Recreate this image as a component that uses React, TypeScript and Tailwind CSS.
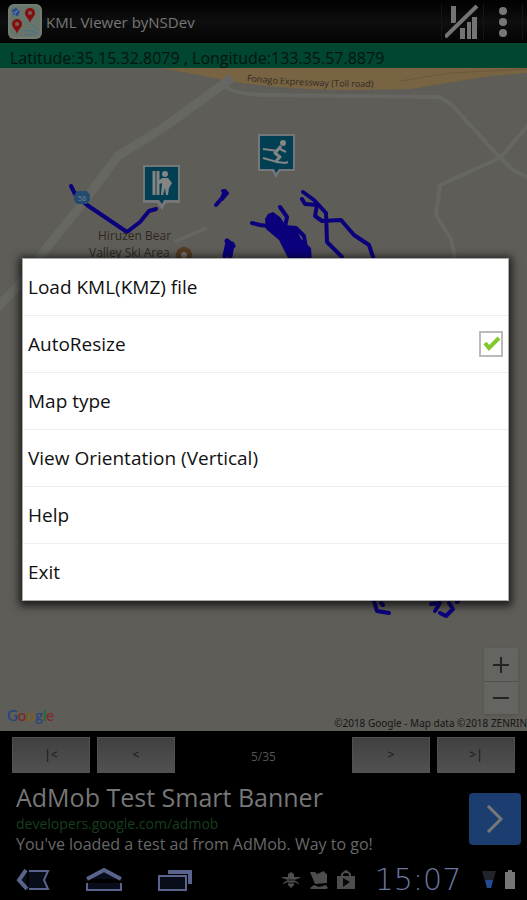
import React, { useState } from 'react';

const menuItems = [
  'Load KML(KMZ) file',
  'AutoResize',
  'Map type',
  'View Orientation (Vertical)',
  'Help',
  'Exit',
];

const Header: React.FC = () => (
  <header className="flex h-[43px] items-center bg-gradient-to-b from-[#020202] via-[#0f0f0f] to-[#040404] pr-1 pl-2">
    <AppIcon />
    <h1 className="ml-1 flex-1 text-[15px] leading-6 text-[#777777]">KML Viewer byNSDev</h1>
    <button aria-label="Signal" className="flex h-9 w-[42px] items-center justify-center border-l border-[#151515]">
      <svg width="36" height="36" viewBox="0 0 36 36" fill="#747474">
        <rect x="6" y="2" width="5" height="17" />
        <rect x="15" y="24" width="5" height="11" />
        <rect x="22" y="18" width="4" height="17" />
        <rect x="27" y="13" width="5" height="22" />
        <path d="M1 33L31 3" stroke="#090909" strokeWidth="7" />
        <path d="M0 33L32 2" stroke="#747474" strokeWidth="4" />
      </svg>
    </button>
    <button aria-label="More options" className="flex h-9 w-10 items-center justify-center border-x border-[#151515]">
      <svg width="12" height="32" viewBox="0 0 12 32" fill="#777">
        <circle cx="6" cy="5" r="4" />
        <circle cx="6" cy="16" r="4" />
        <circle cx="6" cy="27" r="4" />
      </svg>
    </button>
  </header>
);

const AppIcon: React.FC = () => (
  <svg width="34" height="35" viewBox="0 0 34 35">
    <rect width="34" height="35" rx="6" fill="#747c72" />
    <rect x="2" y="2" width="30" height="31" rx="5" fill="#68756a" />
    <path d="M4 6l4-2 4 3-2 5-5-1z" fill="#24488b" />
    <path d="M5 9l6-3M6 12l3-5" stroke="#6680a0" />
    <path d="M22 20l4 2 3 4M14 27l6-1 10 3M17 31l10-1" stroke="#49718a" fill="none" />
    <path d="M22 19c-1-5-5-6-5-10a5 5 0 0 1 10 0c0 4-4 5-5 10z" fill="#850d0d" />
    <circle cx="22" cy="9" r="2" fill="#74605c" />
    <path d="M9 30c-1-5-5-6-5-10a5 5 0 0 1 10 0c0 4-4 5-5 10z" fill="#850d0d" />
    <circle cx="9" cy="20" r="2" fill="#74605c" />
  </svg>
);

const MapView: React.FC = () => (
  <main className="relative flex-1 overflow-hidden bg-[#5f5d58]">
    <svg
      className="absolute inset-0 h-full w-full"
      viewBox="0 68 527 663"
      preserveAspectRatio="xMidYMid slice"
      fontFamily="Open Sans, sans-serif"
    >
      {/* Expressway */}
      <path d="M162 68L235 82Q300 91 365 90L410 89L490 76L527 73V68z" fill="#786443" />
      <path d="M400 81L450 73L527 69" fill="none" stroke="#6c593c" />
      <path id="expressway" d="M247 81Q300 87 380 87" fill="none" />
      <text fontSize="9" fill="#302a22">
        <textPath href="#expressway">Fonago Expressway (Toll road)</textPath>
      </text>

      {/* Roads */}
      <g fill="none" stroke="#666663" strokeLinejoin="round">
        <path d="M232 78L160 130L118 156L82 204L48 246L20 284L-5 310" strokeWidth="9" />
        <path d="M224 85Q232 94 264 95L440 97L452 105L500 158L512 169L530 179" strokeWidth="4" />
        <path d="M530 123L500 158L440 185L436 215L451 239L456 262" strokeWidth="4" />
        <path d="M174 242L207 228" strokeWidth="3" />
      </g>

      {/* Tracks */}
      <g fill="none" stroke="#0b007c" strokeWidth="4" strokeLinecap="round" strokeLinejoin="round">
        <path d="M71 186L76 196L87 205L127 232L140 222L149 211L156 209" />
        <path d="M216 205L222 198L225 191M223 191L227 193L222 199" />
        <path d="M228 242L225 256M232 244L230 256M227 241L233 246" strokeWidth="5" />
        <path d="M252 223L260 225L268 226" />
        <path d="M280 207L287 217L285 227L296 228L304 236L306 248" />
        <path d="M303 192L314 200L326 213L327 242L342 257" />
        <path d="M302 199L305 204L317 205L315 216L322 221L341 220L354 235L369 245L374 260" />
        <path d="M374 601L377 611L389 613M381 603L383 605" />
        <path d="M431 604L440 603L435 611M449 603L453 609L446 616L440 613M457 602L459 600" />
      </g>
      <path d="M265 219L268 214L273 212L280 217L286 226L297 230L301 239L311 248L312 262H290L279 240L266 229z" fill="#0b007c" />

      <path d="M77 191h10l3 4v5l-3 4h-10l-3-4v-5z" fill="#244a70" />
      <text x="82" y="201" textAnchor="middle" fontSize="7" fill="#75828c">58</text>

      <g fontSize="12" fill="#2e2721">
        <text x="98" y="240">Hiruzen Bear</text>
        <text x="89" y="257">Valley Ski Area</text>
      </g>
      <circle cx="184" cy="255" r="8" fill="#533b24" />
      <circle cx="184" cy="255" r="3" fill="#77716a" />

      {/* Ski rental marker */}
      <g transform="translate(143 165)">
        <path d="M0 0h37v38H23l-4 7-5-7H0z" fill="#73777a" />
        <path d="M2 2h33v33H21l-2 4-3-4H2z" fill="#023f53" />
        <path d="M11 6v24M15 6v24" stroke="#858585" strokeWidth="3" />
        <circle cx="22" cy="9" r="3" fill="#858585" />
        <path d="M19 13h6l4 5-3 5-1 7h-2l-1-7-2 7h-2l1-12-5 2v-3z" fill="#858585" />
      </g>

      {/* Skier marker */}
      <g transform="translate(258 134)">
        <path d="M0 0h37v37H22l-4 7-4-7H0z" fill="#73777a" />
        <path d="M2 2h33v33H21l-3 4-2-4H2z" fill="#023f53" />
        <circle cx="25" cy="9" r="3" fill="#858585" />
        <path d="M23 12L17 19L22 23L18 27" fill="none" stroke="#858585" strokeWidth="3" strokeLinejoin="round" />
        <path d="M22 15L28 18M5 15L20 17M5 24L19 28L27 29L30 28" fill="none" stroke="#858585" strokeWidth="2" />
      </g>
    </svg>

    <div className="absolute right-[9px] bottom-[17px] flex flex-col bg-[#646461] shadow">
      <button aria-label="Zoom in" className="flex h-[34px] w-[34px] items-center justify-center border-b border-[#52524f]">
        <svg width="16" height="16" viewBox="0 0 16 16" stroke="#242424" strokeWidth="2"><path d="M0 8h16M8 0v16" /></svg>
      </button>
      <button aria-label="Zoom out" className="flex h-8 w-[34px] items-center justify-center">
        <svg width="16" height="16" viewBox="0 0 16 16" stroke="#242424" strokeWidth="2"><path d="M0 8h16" /></svg>
      </button>
    </div>

    <div className="absolute bottom-[6px] left-[7px] font-['Lato'] text-[15px] leading-5 font-medium">
      <span className="text-[#21457e]">G</span>
      <span className="text-[#7e2924]">o</span>
      <span className="text-[#806313]">o</span>
      <span className="text-[#21457e]">g</span>
      <span className="text-[#20653a]">l</span>
      <span className="text-[#7e2924]">e</span>
    </div>
    <p className="absolute right-0 bottom-0 font-['Noto_Sans'] text-[10px] leading-4 whitespace-nowrap text-[#151515]">
      ©2018 Google - Map data ©2018 ZENRIN
    </p>
  </main>
);

const PageButton: React.FC<{ label: string; children: string }> = ({ label, children }) => (
  <button
    aria-label={label}
    className="h-9 w-[78px] border border-[#515151] bg-gradient-to-b from-[#404040] to-[#515151] text-xs text-[#151515]"
  >
    {children}
  </button>
);

const Pager: React.FC = () => (
  <nav className="flex h-12 items-center gap-[7px] px-3">
    <PageButton label="First">|&lt;</PageButton>
    <PageButton label="Previous">&lt;</PageButton>
    <span className="flex-1 pt-1 text-center text-xs text-[#555555]">5/35</span>
    <PageButton label="Next">&gt;</PageButton>
    <PageButton label="Last">&gt;|</PageButton>
  </nav>
);

const AdBanner: React.FC = () => (
  <section className="flex h-20 items-center pr-[6px] pl-4">
    <div className="min-w-0 flex-1 pb-1">
      <h2 className="text-[25px] leading-[34px] text-[#777777]">AdMob Test Smart Banner</h2>
      <a href="#" className="block text-sm leading-5 text-[#173f1c]">developers.google.com/admob</a>
      <p className="text-base leading-5 text-[#686868]">You've loaded a test ad from AdMob. Way to go!</p>
    </div>
    <button aria-label="Open ad" className="flex h-[52px] w-[52px] items-center justify-center rounded bg-[#1c3d70]">
      <svg width="18" height="28" viewBox="0 0 18 28" fill="none" stroke="#777" strokeWidth="3"><path d="M2 1L15 14L2 27" /></svg>
    </button>
  </section>
);

const SystemBar: React.FC = () => (
  <footer className="flex h-[41px] items-center pr-3 pl-4">
    <div className="flex flex-1 gap-9">
      <button aria-label="Back">
        <svg width="34" height="22" viewBox="0 0 34 22" fill="#080d19" stroke="#59638b" strokeWidth="2">
          <path d="M13 2H32L28 11L32 20H13" />
          <path d="M10 1L3 11L11 20" strokeWidth="4" />
        </svg>
      </button>
      <button aria-label="Home">
        <svg width="36" height="24" viewBox="0 0 36 24" fill="#080d19" stroke="#59638b" strokeWidth="2">
          <path d="M1 15V22H35V15" />
          <path d="M1 11L18 2L35 11" strokeWidth="4" />
        </svg>
      </button>
      <button aria-label="Recent apps">
        <svg width="34" height="22" viewBox="0 0 34 22" fill="#080d19" stroke="#59638b" strokeWidth="2">
          <path d="M10 3H32V15" strokeWidth="4" fill="none" />
          <path d="M1 7H28V21H1z" />
        </svg>
      </button>
    </div>
    <div className="flex items-center gap-2">
      <svg width="20" height="18" viewBox="0 0 20 18" fill="#4d4d4d">
        <path d="M7 3l3-2 3 2v3h6v1l-6 2 5 3v1l-5-2v3l-3 3-3-3v-3l-5 2v-1l5-3-6-2V6h6z" />
        <path d="M7 9h6M7 12h6" stroke="#111" />
      </svg>
      <svg width="20" height="20" viewBox="0 0 20 20" fill="#4d4d4d">
        <path d="M1 2h5l2 2 7-3 1 2 2 1v9l-12 1z" />
        <path d="M1 18l4-3 5 2 7-2 2 3-2 1H2z" />
      </svg>
      <svg width="18" height="20" viewBox="0 0 18 20" fill="#4d4d4d">
        <path d="M5 6V4l4-3 4 3v2" fill="none" stroke="#4d4d4d" strokeWidth="2" />
        <path d="M0 6h18v13H0z" />
        <path d="M6 8l7 4-7 5z" fill="#080808" />
      </svg>
      <time className="w-[110px] text-center font-['DejaVu_Sans'] text-[30px] leading-8 font-extralight text-[#6b76a3]">15:07</time>
      <svg width="16" height="20" viewBox="0 0 16 20">
        <path d="M1 1h14l-5 17H6z" fill="#20242b" />
        <path d="M4 10h8l-2 8H6z" fill="#244a91" />
      </svg>
      <svg width="10" height="20" viewBox="0 0 10 20" fill="#767676"><path d="M3 0h4v2h3v17H0V2h3z" /></svg>
    </div>
  </footer>
);

const OptionsMenu: React.FC = () => {
  const [autoResize, setAutoResize] = useState(true);
  const row = 'flex h-14 w-full items-center pr-[5px] pl-[5px] pt-px text-left text-[19px] text-[#111111]';

  return (
    <div className="absolute inset-x-0 top-0 bottom-[42px] flex items-center pr-[18px] pl-[22px]">
      <ul role="menu" className="w-full divide-y divide-[#eeeeee] border border-[#aaaaaa] bg-white shadow-[0_2px_8px_3px_rgba(0,0,0,0.7)]">
        {menuItems.map((item) => (
          <li key={item}>
            {item === 'AutoResize' ? (
              <label className={row}>
                <span className="flex-1">{item}</span>
                <span className="relative h-[26px] w-6">
                  <input
                    type="checkbox"
                    checked={autoResize}
                    onChange={() => setAutoResize(!autoResize)}
                    className="block h-full w-full appearance-none border-2 border-[#bbbbbb] bg-white"
                  />
                  {autoResize && (
                    <svg className="pointer-events-none absolute inset-0" width="24" height="26" viewBox="0 0 24 26" fill="none">
                      <path d="M6 12L10 17L20 7" stroke="#83c92e" strokeWidth="4" />
                    </svg>
                  )}
                </span>
              </label>
            ) : (
              <button role="menuitem" className={row}>{item}</button>
            )}
          </li>
        ))}
      </ul>
    </div>
  );
};

const App: React.FC = () => (
  <div className="relative flex min-h-screen flex-col bg-black font-['Open_Sans',sans-serif]">
    <Header />
    <div className="flex h-[25px] items-end bg-[#004630] px-[10px] text-base leading-5 text-[#061510]">
      Latitude:35.15.32.8079 , Longitude:133.35.57.8879
    </div>
    <MapView />
    <Pager />
    <AdBanner />
    <SystemBar />
    <OptionsMenu />
  </div>
);

export default App;
